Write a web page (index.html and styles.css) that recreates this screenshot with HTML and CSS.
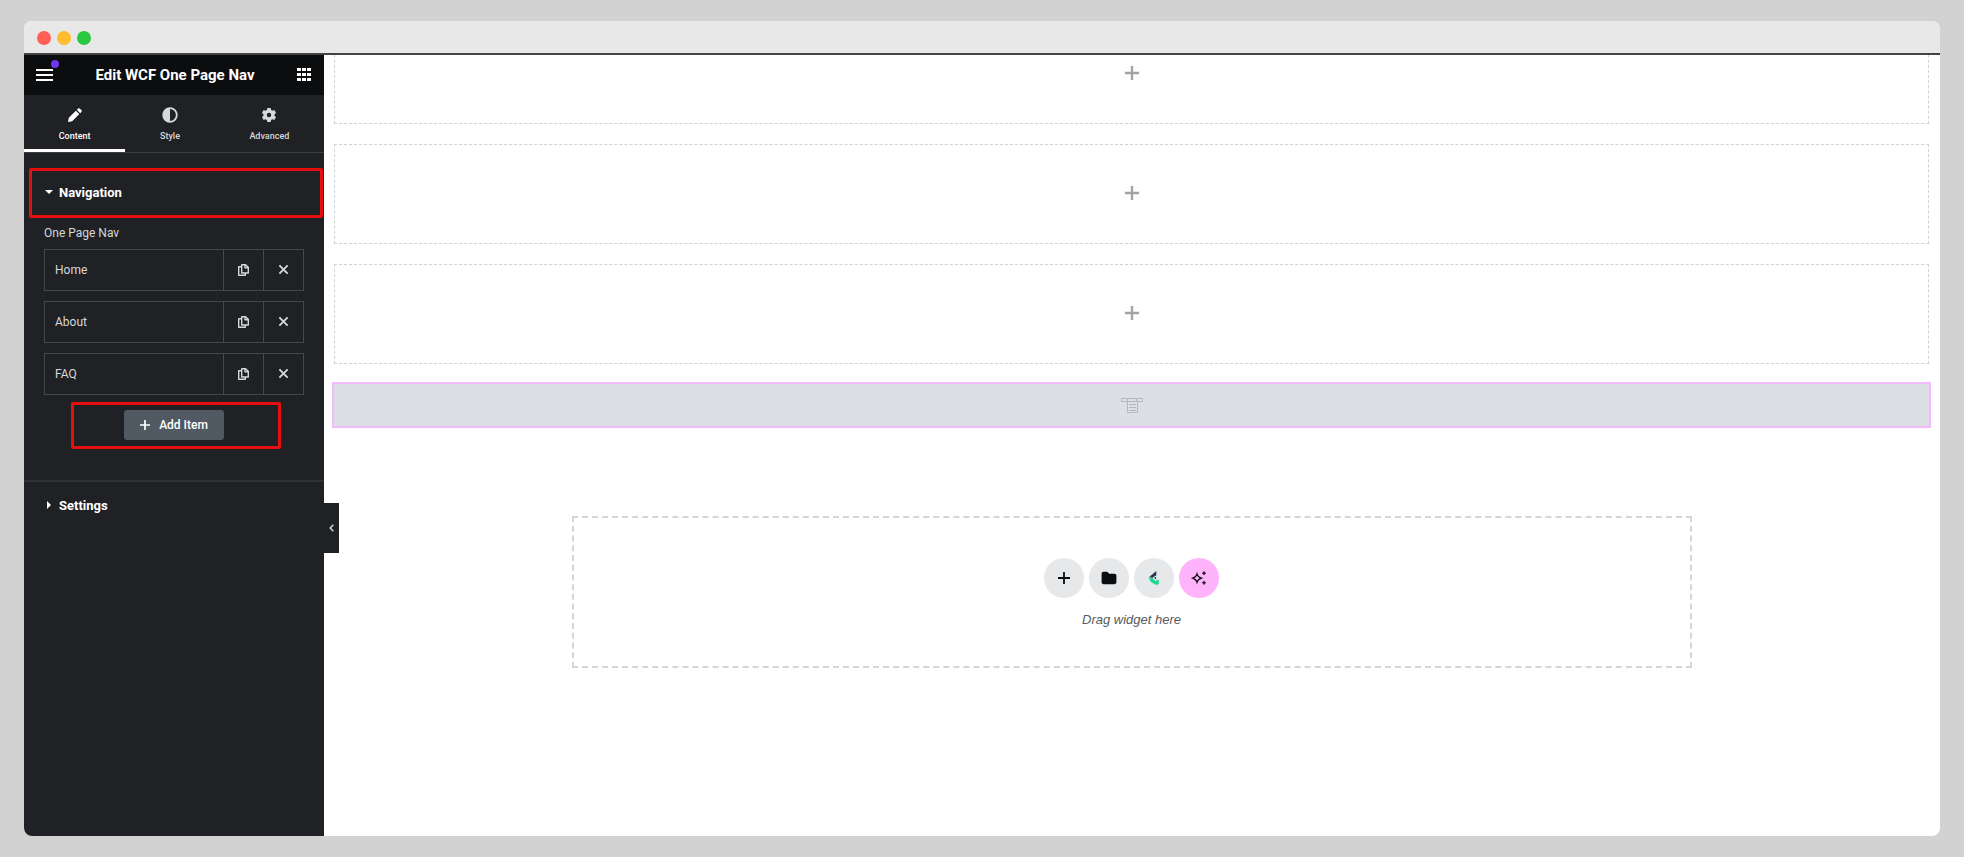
FILE: index.html
```html
<!DOCTYPE html>
<html lang="en">
<head>
<meta charset="utf-8">
<title>Edit WCF One Page Nav</title>
<link rel="stylesheet" href="styles.css">
</head>
<body>
<svg class="defs" aria-hidden="true">
  <symbol id="copy" viewBox="0 0 11 12"><path d="M3.700.7h3.800l2.800 2.600v5.700H3.700zM7 .8v3h3.200M3.500 2.700H.7v8.600h6.600V9.500" fill="none" stroke="currentColor" stroke-width="1.400" stroke-linejoin="round"/></symbol>
  <symbol id="close" viewBox="0 0 12 12"><path d="M1.500 1.500l9 9M10.500 1.500l-9 9" stroke="currentColor" stroke-width="2"/></symbol>
  <symbol id="plus" viewBox="0 0 14 14"><path d="M7 0v14M0 7h14" stroke="currentColor" stroke-width="2.400"/></symbol>
</svg>
<div class="window">
  <div class="titlebar"><span class="dot red"></span><span class="dot amber"></span><span class="dot green"></span></div>
  <div class="workspace">
    <aside class="panel">
      <header class="panel-header">
        <button class="icon-button menu" aria-label="Menu"><svg width="17" height="12" viewBox="0 0 17 12"><path d="M0 1h17M0 6h17M0 11h17" stroke="currentColor" stroke-width="2"/></svg><span class="notice"></span></button>
        <h1>Edit WCF One Page Nav</h1>
        <button class="icon-button" aria-label="Widgets"><svg width="14" height="13" viewBox="0 0 14 13"><path d="M0 0h4v3H0zM5 0h4v3H5zM10 0h4v3h-4zM0 5h4v3H0zM5 5h4v3H5zM10 5h4v3h-4zM0 10h4v3H0zM5 10h4v3H5zM10 10h4v3h-4z" fill="currentColor"/></svg></button>
      </header>
      <nav class="tabs">
        <button class="tab active"><svg width="16" height="16" viewBox="0 0 16 16"><path d="M1 15l.8-4.200L8.900 3.700l3.400 3.400-7.100 7.100zM9.800 2.800l1.100-1.100c.7-.7 1.500-.6 2.100 0l1.300 1.300c.6.6.6 1.400 0 2.100l-1.100 1.100z" fill="currentColor"/></svg>Content</button>
        <button class="tab"><svg width="16" height="16" viewBox="0 0 16 16"><circle cx="8" cy="8" r="6.800" fill="none" stroke="currentColor" stroke-width="1.800"/><path d="M8 1a7 7 0 000 14z" fill="currentColor"/></svg>Style</button>
        <button class="tab"><svg width="16" height="16" viewBox="0 0 16 16"><path fill="currentColor" fill-rule="evenodd" d="M6.300 1h3.400l.4 2 1.300.8 2-.7 1.600 2.900-1.500 1.300v1.500L15 10.100 13.400 13l-2-.7-1.300.8-.4 1.900H6.300l-.4-1.900-1.300-.8-2 .7L1 10.100l1.500-1.300V7.300L1 6l1.600-2.900 2 .7L5.900 3zM8 5.800a2.200 2.200 0 100 4.400 2.200 2.200 0 000-4.400z"/></svg>Advanced</button>
      </nav>
      <section class="group">
        <button class="group-title marked" aria-expanded="true"><svg width="8" height="8" viewBox="0 0 8 8"><path d="M0 2h8L4 6z" fill="currentColor"/></svg>Navigation</button>
        <div class="controls">
          <p class="label">One Page Nav</p>
          <ul class="repeater">
            <li><button class="item">Home</button><button class="tool" aria-label="Duplicate Home"><svg width="11" height="12"><use href="#copy"/></svg></button><button class="tool" aria-label="Remove Home"><svg width="11" height="11"><use href="#close"/></svg></button></li>
            <li><button class="item">About</button><button class="tool" aria-label="Duplicate About"><svg width="11" height="12"><use href="#copy"/></svg></button><button class="tool" aria-label="Remove About"><svg width="11" height="11"><use href="#close"/></svg></button></li>
            <li><button class="item">FAQ</button><button class="tool" aria-label="Duplicate FAQ"><svg width="11" height="12"><use href="#copy"/></svg></button><button class="tool" aria-label="Remove FAQ"><svg width="11" height="11"><use href="#close"/></svg></button></li>
          </ul>
          <div class="add marked"><button class="add-button"><svg width="10" height="10"><use href="#plus"/></svg>Add Item</button></div>
        </div>
      </section>
      <section class="group divided">
        <button class="group-title" aria-expanded="false"><svg width="8" height="8" viewBox="0 0 8 8"><path d="M2 0v8l4-4z" fill="currentColor"/></svg>Settings</button>
      </section>
      <button class="collapse" aria-label="Hide panel"><svg width="5" height="8" viewBox="0 0 5 8"><path d="M4.300.7L1.200 4l3.100 3.300" fill="none" stroke="currentColor" stroke-width="1.500"/></svg></button>
    </aside>
    <main class="canvas">
      <div class="containers">
        <div class="empty"><svg width="14" height="14"><use href="#plus"/></svg></div>
        <div class="empty"><svg width="14" height="14"><use href="#plus"/></svg></div>
        <div class="empty"><svg width="14" height="14"><use href="#plus"/></svg></div>
      </div>
      <div class="widget"><svg width="22" height="16" viewBox="0 0 22 16"><path d="M.5 1.500h21v3H.5zM6.500 1.500v3M15.500 1.500v3M6.500 4.500v11h10v-11M8 7.500h7M8 10.500h7M8 13.500h7" fill="none" stroke="currentColor"/></svg></div>
      <div class="drop">
        <div class="actions">
          <button aria-label="Add new container"><svg width="12" height="12" viewBox="0 0 12 12"><path d="M6 0v12M0 6h12" stroke="currentColor" stroke-width="1.800"/></svg></button>
          <button aria-label="Add template"><svg width="16" height="14" viewBox="0 0 16 14"><path d="M2.500.7h3.700l2 2h5.300c1.100 0 1.900.7 1.900 1.800v6.800c0 1.100-.8 1.900-1.900 1.900h-11c-1.100 0-1.900-.8-1.900-1.900V2.600C.6 1.500 1.400.7 2.500.7z" fill="currentColor"/></svg></button>
          <button aria-label="Template library"><svg width="12" height="16" viewBox="0 0 12 16"><path d="M1.200 7L8.300 1v4.200L4.200 8z" fill="#2b3a4b"/><path d="M.5 7.300l3.600.4 3.400 3.300 3.300-1.400V14l-2.500 1L2.800 12z" fill="#1fd693"/><circle cx="7.400" cy="8" r=".9" fill="#2b3a4b"/></svg></button>
          <button class="ai" aria-label="Build with AI"><svg width="16" height="16" viewBox="0 0 16 16"><path d="M6 3.800c.7 2.600 1.700 3.600 4.300 4.300C7.700 8.800 6.700 9.800 6 12.400 5.300 9.800 4.300 8.800 1.700 8.100 4.300 7.400 5.300 6.400 6 3.800z" fill="none" stroke="currentColor" stroke-width="1.200"/><path d="M13 1.200l.6 1.400 1.400.6-1.400.6-.6 1.400-.6-1.400-1.400-.6 1.400-.6zM13 10.800l.6 1.400 1.400.6-1.400.6-.6 1.400-.6-1.400-1.400-.6 1.400-.6z" fill="currentColor" stroke="currentColor" stroke-width=".4"/></svg></button>
        </div>
        <p>Drag widget here</p>
      </div>
    </main>
  </div>
</div>
</body>
</html>
```
FILE: styles.css
```css
* { box-sizing: border-box; }
body {
  margin: 0;
  min-height: 100vh;
  display: flex;
  padding: 21px 24px;
  background: #d2d2d2;
  font-family: Roboto, "Liberation Sans", sans-serif;
}
button {
  border: 0;
  padding: 0;
  background: none;
  color: inherit;
  font: inherit;
  cursor: pointer;
}
svg { display: block; flex: none; }
h1, p, ul { margin: 0; padding: 0; }
.defs { position: absolute; width: 0; height: 0; }

.window {
  flex: 1;
  display: flex;
  flex-direction: column;
  border-radius: 8px;
  overflow: hidden;
  background: #fff;
}
.titlebar {
  display: flex;
  align-items: center;
  gap: 6px;
  height: 34px;
  padding: 2px 13px 0;
  background: #e8e8e8;
  border-bottom: 2px solid #444;
}
.dot { width: 14px; height: 14px; border-radius: 50%; }
.red { background: #ff5f57; }
.amber { background: #febc2e; }
.green { background: #28c840; }

.workspace { flex: 1; display: flex; }
.panel {
  position: relative;
  flex: none;
  width: 300px;
  background: #1f2124;
  color: #d5d8dc;
  font-size: 12px;
}
.panel-header {
  display: flex;
  align-items: center;
  justify-content: space-between;
  height: 40px;
  padding: 0 13px 1px 12px;
  background: #0c0d0e;
  color: #fff;
}
.panel-header h1 { font-size: 15px; font-weight: 700; line-height: 20px; }
.icon-button { position: relative; }
.notice {
  position: absolute;
  top: -9px;
  right: -6px;
  width: 8px;
  height: 8px;
  border-radius: 50%;
  background: #6f35f0;
}
.tabs {
  display: flex;
  height: 58px;
  border-bottom: 1px solid #3a3d41;
}
.tab {
  flex: auto;
  display: flex;
  flex-direction: column;
  align-items: center;
  gap: 6px;
  padding: 12px 24px 0;
  border-bottom: 3px solid transparent;
  font-size: 9px;
  font-weight: 500;
  line-height: 14px;
}
.tab.active { color: #fff; border-color: #fff; }

.marked { border: 3px solid #e60f0f; border-radius: 2px; }
.group { padding-top: 15px; }
.group-title {
  display: flex;
  align-items: center;
  gap: 6px;
  width: 294px;
  height: 50px;
  margin-left: 5px;
  padding: 0 13px 2px;
  color: #fff;
  font-size: 13px;
  font-weight: 700;
}
.divided { margin-top: 31px; padding-top: 0; border-top: 2px solid #303236; }
.divided .group-title { padding: 0 16px 4px; }
.controls { padding: 7px 20px 0; }
.label { line-height: 16px; }
.repeater {
  display: grid;
  gap: 10px;
  margin-top: 8px;
  list-style: none;
}
.repeater li {
  display: flex;
  height: 42px;
  border: 1px solid #44474c;
}
.item { flex: 1; padding: 0 10px; text-align: left; }
.tool {
  display: grid;
  place-items: center;
  width: 40px;
  padding-bottom: 1px;
  border-left: 1px solid #44474c;
}
.add {
  display: flex;
  justify-content: center;
  width: 210px;
  margin: 7px 0 0 27px;
  padding: 5px 4px 6px 0;
}
.add-button {
  display: flex;
  align-items: center;
  justify-content: center;
  gap: 9px;
  width: 100px;
  height: 30px;
  border-radius: 3px;
  background: #515962;
  color: #fff;
  font-weight: 500;
}
.collapse {
  position: absolute;
  top: 448px;
  left: 100%;
  display: grid;
  place-items: center;
  width: 15px;
  height: 50px;
  background: #1f2124;
}

.canvas { flex: 1; min-width: 0; padding: 0 9px 0 8px; }
.containers {
  display: grid;
  gap: 20px;
  margin-top: -31px;
  padding: 0 2px;
  clip-path: inset(31px 0 0);
}
.empty {
  display: grid;
  place-items: center;
  height: 100px;
  padding-bottom: 2px;
  border: 1px dashed #cfd2d5;
  color: #a4a4a4;
}
.widget {
  display: grid;
  place-items: center;
  height: 46px;
  margin-top: 18px;
  border: 2px solid #f3bafd;
  background: #dcdfe4;
  color: #b4b7bb;
}
.drop {
  display: flex;
  flex-direction: column;
  align-items: center;
  gap: 13px;
  max-width: 1120px;
  min-height: 152px;
  margin: 88px auto 0;
  padding-top: 40px;
  border: 2px dashed #d5d5d5;
  color: #555a60;
  font-family: "Liberation Sans", sans-serif;
  font-size: 13px;
  font-style: italic;
  line-height: 18px;
}
.actions { display: flex; gap: 5px; color: #0c0d0e; }
.actions button {
  display: grid;
  place-items: center;
  width: 40px;
  height: 40px;
  border-radius: 50%;
  background: #e6e8ea;
}
.actions .ai { background: #ffb3fb; }
```
